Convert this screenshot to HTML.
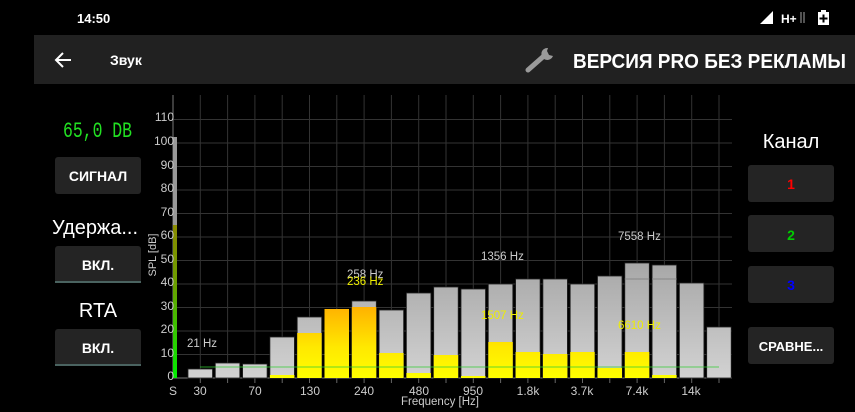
<!DOCTYPE html>
<html><head><meta charset="utf-8"><style>
html,body{margin:0;padding:0;background:#000;width:855px;height:412px;overflow:hidden}
svg{display:block;font-family:"Liberation Sans",sans-serif}
</style></head><body>
<svg width="855" height="412" viewBox="0 0 855 412" xmlns="http://www.w3.org/2000/svg">
<defs>
<linearGradient id="gy" gradientUnits="userSpaceOnUse" x1="0" y1="300" x2="0" y2="378"><stop offset="0" stop-color="#ffa800"/><stop offset="0.6" stop-color="#ffe800"/><stop offset="1" stop-color="#ffff00"/></linearGradient>
<linearGradient id="gg" gradientUnits="userSpaceOnUse" x1="0" y1="260" x2="0" y2="378"><stop offset="0" stop-color="#a6a6a6"/><stop offset="1" stop-color="#d2d2d2"/></linearGradient>
<linearGradient id="gl" gradientUnits="userSpaceOnUse" x1="0" y1="225" x2="0" y2="378"><stop offset="0" stop-color="#8a8a00"/><stop offset="0.4" stop-color="#6aa000"/><stop offset="1" stop-color="#00ee00"/></linearGradient>
</defs>
<rect width="855" height="412" fill="#000"/>
<text x="77" y="23" fill="#fff" font-size="13" font-weight="bold">14:50</text>
<polygon points="760,24 773,24 773,11" fill="#fff"/>
<text x="781" y="23" fill="#fff" font-size="12" font-weight="bold">H+</text>
<path d="M801,12 v11 M804,12 v11" stroke="#888" stroke-width="1.2"/>
<rect x="818" y="12" width="11" height="13" fill="#fff"/><rect x="821" y="10" width="5" height="2" fill="#fff"/>
<path d="M823.5,14.5 v8 M819.5,18.5 h8" stroke="#000" stroke-width="2"/>
<rect x="34" y="35" width="821" height="49" fill="#212121"/>
<path d="M71,60 H56 M63,53 L56,60 L63,67" stroke="#fff" stroke-width="2" fill="none"/>
<text x="110" y="65" fill="#fff" font-size="14" font-weight="bold">Звук</text>
<path d="M528,70 L545,55" stroke="#9a9a9a" stroke-width="5" stroke-linecap="round"/>
<path d="M548,48 a6,6 0 1 0 5,8 l-4,-1 l-2,-4 z" fill="#9a9a9a"/>
<text x="573" y="68" fill="#fff" font-size="20" font-weight="bold" textLength="273" lengthAdjust="spacingAndGlyphs">ВЕРСИЯ PRO БЕЗ РЕКЛАМЫ</text>
<text x="63" y="137" fill="#22e022" font-size="22" font-family="Liberation Mono,monospace" textLength="69" lengthAdjust="spacingAndGlyphs">65,0 DB</text>
<rect x="55" y="157" width="86" height="37" rx="3" fill="#242424"/>
<text x="98" y="181" fill="#fff" font-size="14" font-weight="bold" text-anchor="middle">СИГНАЛ</text>
<text x="95" y="234" fill="#fff" font-size="20" text-anchor="middle" textLength="86" lengthAdjust="spacingAndGlyphs">Удержа...</text>
<rect x="55" y="246" width="86" height="37" rx="3" fill="#242424"/>
<rect x="55" y="281" width="86" height="2" fill="#4a6360"/>
<text x="98" y="270" fill="#fff" font-size="14" font-weight="bold" text-anchor="middle">ВКЛ.</text>
<text x="98" y="317" fill="#fff" font-size="20" text-anchor="middle">RTA</text>
<rect x="55" y="329" width="86" height="37" rx="3" fill="#242424"/>
<rect x="55" y="364" width="86" height="2" fill="#4a6360"/>
<text x="98" y="353" fill="#fff" font-size="14" font-weight="bold" text-anchor="middle">ВКЛ.</text>
<text x="791" y="148" fill="#fff" font-size="20" text-anchor="middle">Канал</text>
<rect x="748" y="165" width="86" height="37" rx="3" fill="#242424"/>
<text x="791" y="189" fill="#f00" font-size="14" font-weight="bold" text-anchor="middle">1</text>
<rect x="748" y="215" width="86" height="37" rx="3" fill="#242424"/>
<text x="791" y="240" fill="#0c0" font-size="14" font-weight="bold" text-anchor="middle">2</text>
<rect x="748" y="266" width="86" height="37" rx="3" fill="#242424"/>
<text x="791" y="290" fill="#00f" font-size="14" font-weight="bold" text-anchor="middle">3</text>
<rect x="748" y="327" width="86" height="37" rx="3" fill="#242424"/>
<text x="791" y="351" fill="#fff" font-size="13" font-weight="bold" text-anchor="middle">СРАВНЕ...</text>
<g stroke="#333" stroke-width="1">
<path d="M173,354.5H732M173,331H732M173,307.5H732M173,284H732M173,260.5H732M173,237H732M173,213.5H732M173,190H732M173,166.5H732M173,143H732M173,119.5H732"/>
<path d="M200.3,95V378M227.6,95V378M254.9,95V378M282.2,95V378M309.5,95V378M336.8,95V378M364.1,95V378M391.4,95V378M418.7,95V378M446,95V378M473.3,95V378M500.6,95V378M527.9,95V378M555.2,95V378M582.5,95V378M609.8,95V378M637.1,95V378M664.4,95V378M691.7,95V378M719,95V378"/>
</g>
<path d="M200.3,378v5M227.6,378v5M254.9,378v5M282.2,378v5M309.5,378v5M336.8,378v5M364.1,378v5M391.4,378v5M418.7,378v5M446,378v5M473.3,378v5M500.6,378v5M527.9,378v5M555.2,378v5M582.5,378v5M609.8,378v5M637.1,378v5M664.4,378v5M691.7,378v5M719,378v5" stroke="#666"/>
<path d="M173,95V378H732" stroke="#777" fill="none"/>
<rect x="173" y="137" width="4" height="88" fill="#999"/>
<rect x="173" y="225" width="4" height="153" fill="url(#gl)"/>
<g fill="#ccc" font-size="12" text-anchor="end">
<text x="174" y="380">0</text><text x="174" y="357">10</text><text x="174" y="333">20</text><text x="174" y="310">30</text><text x="174" y="286">40</text><text x="174" y="263">50</text><text x="174" y="239">60</text><text x="174" y="216">70</text><text x="174" y="192">80</text><text x="174" y="169">90</text><text x="174" y="145">100</text><text x="174" y="121">110</text>
</g>
<text x="156" y="255" fill="#ccc" font-size="11" text-anchor="middle" transform="rotate(-90 156 255)">SPL [dB]</text>
<g fill="url(#gg)" stroke="#222" stroke-width="0.8">
<rect x="188" y="369" width="24.5" height="9"/>
<rect x="215.3" y="363" width="24.5" height="15"/>
<rect x="242.6" y="364" width="24.5" height="14"/>
<rect x="269.9" y="337" width="24.5" height="41"/>
<rect x="297.2" y="317" width="24.5" height="61"/>
<rect x="351.8" y="301" width="24.5" height="77"/>
<rect x="379.1" y="310" width="24.5" height="68"/>
<rect x="406.4" y="293" width="24.5" height="85"/>
<rect x="433.7" y="287" width="24.5" height="91"/>
<rect x="461" y="289" width="24.5" height="89"/>
<rect x="488.3" y="284" width="24.5" height="94"/>
<rect x="515.6" y="279" width="24.5" height="99"/>
<rect x="542.9" y="279" width="24.5" height="99"/>
<rect x="570.2" y="284" width="24.5" height="94"/>
<rect x="597.5" y="276" width="24.5" height="102"/>
<rect x="624.8" y="263" width="24.5" height="115"/>
<rect x="652.1" y="265" width="24.5" height="113"/>
<rect x="679.4" y="283" width="24.5" height="95"/>
<rect x="706.7" y="327" width="24.5" height="51"/>
</g>
<g fill="url(#gy)">
<rect x="269.9" y="375" width="24.5" height="3"/>
<rect x="297.2" y="333" width="24.5" height="45"/>
<rect x="324.5" y="309" width="24.5" height="69"/>
<rect x="351.8" y="307" width="24.5" height="71"/>
<rect x="379.1" y="353" width="24.5" height="25"/>
<rect x="406.4" y="373" width="24.5" height="5"/>
<rect x="433.7" y="355" width="24.5" height="23"/>
<rect x="461" y="376" width="24.5" height="2"/>
<rect x="488.3" y="342" width="24.5" height="36"/>
<rect x="515.6" y="352" width="24.5" height="26"/>
<rect x="542.9" y="354" width="24.5" height="24"/>
<rect x="570.2" y="352" width="24.5" height="26"/>
<rect x="597.5" y="368" width="24.5" height="10"/>
<rect x="624.8" y="352" width="24.5" height="26"/>
<rect x="652.1" y="375" width="24.5" height="3"/>
</g>
<path d="M624.8,279h24.5M652.1,279h24.5" stroke="#888"/>
<path d="M200,367H719" stroke="#3c3" stroke-width="0.8"/>
<g font-size="11.5">
<text x="187" y="347" fill="#ccc">21 Hz</text>
<text x="347" y="278" fill="#ccc">258 Hz</text>
<text x="347" y="285" fill="#ee0">236 Hz</text>
<text x="481" y="260" fill="#ccc">1356 Hz</text>
<text x="481" y="319" fill="#ee0">1507 Hz</text>
<text x="618" y="240" fill="#ccc">7558 Hz</text>
<text x="618" y="329" fill="#ee0">6610 Hz</text>
</g>
<g fill="#ccc" font-size="12" text-anchor="middle">
<text x="173" y="395">S</text><text x="200" y="395">30</text><text x="255" y="395">70</text><text x="310" y="395">130</text><text x="364" y="395">240</text><text x="419" y="395">480</text><text x="473" y="395">950</text><text x="528" y="395">1.8k</text><text x="582" y="395">3.7k</text><text x="637" y="395">7.4k</text><text x="691" y="395">14k</text>
<text x="440" y="405" font-size="11.5">Frequency [Hz]</text>
</g>
</svg>
</body></html>
